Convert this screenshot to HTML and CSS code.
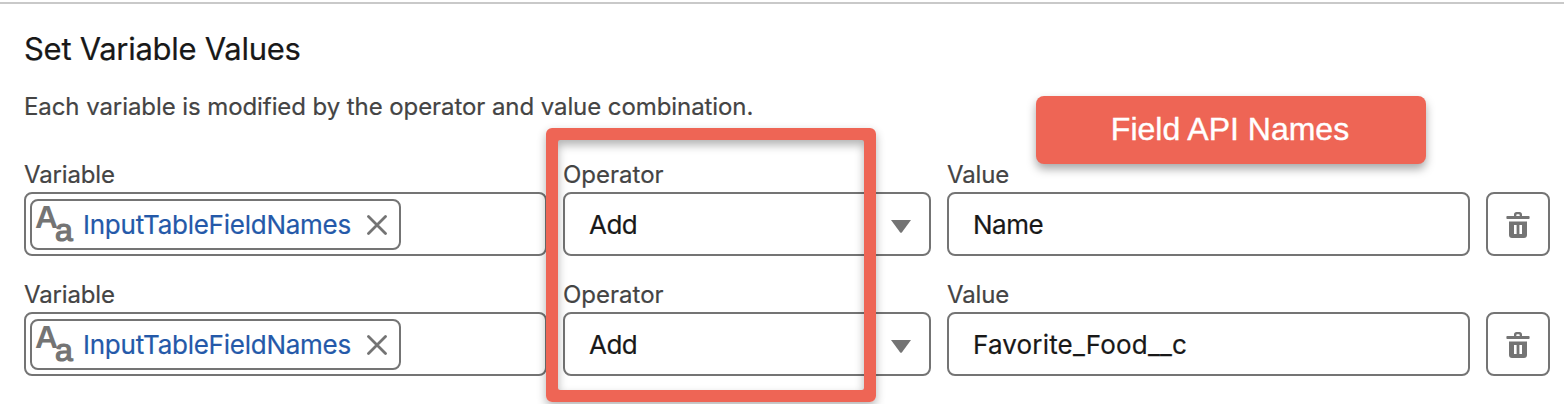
FILE: index.html
```html
<!DOCTYPE html>
<html lang="en">
<head>
<meta charset="utf-8">
<title>Set Variable Values</title>
<link rel="stylesheet" href="styles.css">
</head>
<body>
<svg class="defs" width="0" height="0" aria-hidden="true">
  <symbol id="close" viewBox="0 0 20 20"><path d="M1.5 1.5 18.5 18.5M18.5 1.5 1.5 18.5" fill="none" stroke="#747474" stroke-width="2.8" stroke-linecap="round"/></symbol>
  <symbol id="trash" viewBox="0 0 24 28"><path fill="#747474" fill-rule="evenodd" d="M1.500 5H8V3.600C8 2 9 1 10.500 1h3C15 1 16 2 16 3.600V5h6.500c.7 0 1.100.4 1.100 1v1c0 .6-.4 1-1.100 1h-21C.8 8 .4 7.600.4 7V6c0-.6.400-1 1.100-1ZM10.300 5h3.400V4c0-.5-.3-.8-.8-.8h-1.800c-.5 0-.8.3-.8.800ZM3 10.400h18V24c0 1.800-1.200 3-3 3H6c-1.800 0-3-1.200-3-3ZM8 14v9h2.600v-9ZM13.400 14v9h2.600v-9Z"/></symbol>
</svg>
<main class="panel">
  <h1 class="title">Set Variable Values</h1>
  <p class="description">Each variable is modified by the operator and value combination.</p>
  <div class="rows">
    <div class="row">
      <div class="field"><span class="label label-variable">Variable</span>
        <div class="box lookup"><div class="pill"><span class="type-icon"><b class="big">A</b><b class="small">a</b></span><span class="pill-text">InputTableFieldNames</span><svg class="close"><use href="#close"/></svg></div></div></div>
      <div class="field"><span class="label label-operator">Operator</span>
        <div class="box select"><span class="add">Add</span><svg class="arrow" viewBox="0 0 20 13"><path d="M0 0H20L11 12.300Q10 13.400 9 12.300Z" fill="#747474"/></svg></div></div>
      <div class="field"><span class="label label-value">Value</span>
        <div class="box input"><span class="name">Name</span></div></div>
      <button class="delete" aria-label="Delete"><svg class="trash"><use href="#trash"/></svg></button>
    </div>
    <div class="row">
      <div class="field"><span class="label label-variable">Variable</span>
        <div class="box lookup"><div class="pill"><span class="type-icon"><b class="big">A</b><b class="small">a</b></span><span class="pill-text">InputTableFieldNames</span><svg class="close"><use href="#close"/></svg></div></div></div>
      <div class="field"><span class="label label-operator">Operator</span>
        <div class="box select"><span class="add">Add</span><svg class="arrow" viewBox="0 0 20 13"><path d="M0 0H20L11 12.300Q10 13.400 9 12.300Z" fill="#747474"/></svg></div></div>
      <div class="field"><span class="label label-value">Value</span>
        <div class="box input"><span class="food">Favorite_Food__c</span></div></div>
      <button class="delete" aria-label="Delete"><svg class="trash"><use href="#trash"/></svg></button>
    </div>
  </div>
</main>
<div class="highlight"></div>
<div class="callout"><span class="callout-text">Field API Names</span></div>
</body>
</html>
```
FILE: styles.css
```css
* { box-sizing: border-box; }
body { margin: 0; padding-top: 2px; height: 404px; overflow: hidden; background: #fff; position: relative; font-family: Inter, "Liberation Sans", sans-serif; color: #181818; white-space: nowrap; }
.defs { position: absolute; }
.panel { height: 402px; border-top: 2px solid #c9c9c9; padding: 25px 14px 0 24px; }
.title { margin: 0; font-size: 31px; line-height: 40px; font-weight: 400; letter-spacing: -0.28px; -webkit-text-stroke: 0.2px; }
.description { margin: 22px 0 0; font-size: 24px; line-height: 32px; color: #444; letter-spacing: -0.08px; -webkit-text-stroke: 0.2px; }
.rows { display: flex; flex-direction: column; gap: 20px; margin-top: 33px; }
.row { display: grid; grid-template-columns: 523px 368px 523px 64px; column-gap: 16px; height: 100px; align-items: end; }
.field { display: flex; flex-direction: column; }
.label { font-size: 24px; line-height: 34px; color: #444; -webkit-text-stroke: 0.2px; }
.label-variable, .label-value { letter-spacing: -0.15px; }
.box { display: flex; align-items: center; height: 64px; border: 2px solid #747474; border-radius: 8px; background: #fff; font-size: 26px; }
.lookup { padding-left: 4px; }
.pill { display: flex; align-items: center; width: 371px; height: 51px; border: 2px solid #747474; border-radius: 8px; padding-left: 4px; }
.type-icon { display: flex; width: 38px; height: 42px; color: #747474; font-family: "Liberation Sans", Arial, sans-serif; }
.big { width: 22px; font-size: 32px; line-height: 29px; margin-left: -1px; }
.small { font-size: 32px; line-height: 55px; font-weight: 400; margin-left: -2px; -webkit-text-stroke: 1.2px #747474; }
.pill-text { width: 268px; margin-left: 9px; padding-top: 1px; color: #2459a9; letter-spacing: -0.25px; -webkit-text-stroke: 0.2px; }
.close { width: 20px; height: 20px; margin: 2px 0 0 16px; }
.select { justify-content: space-between; padding: 0 18px 0 24px; }
.input { padding-left: 24px; }
.add, .name, .food { padding-top: 1px; -webkit-text-stroke: 0.2px; }
.add, .name { letter-spacing: -0.5px; }
.food { letter-spacing: 0.17px; }
.arrow { width: 20px; height: 13px; margin-top: 4px; }
.delete { display: flex; align-items: center; justify-content: center; width: 64px; height: 64px; padding: 0; border: 2px solid #747474; border-radius: 8px; background: #fff; }
.trash { width: 24px; height: 28px; margin-top: 1px; }
.highlight { position: absolute; left: 546px; top: 128px; width: 330px; height: 274px; border: 12px solid #ee6555; border-radius: 6px; box-shadow: 0 4px 10px rgba(0,0,0,.3), inset 0 5px 10px rgba(0,0,0,.3); }
.highlight::before { content: ""; position: absolute; inset: -1px; border: 1px solid #ee6555; border-radius: 3px; }
.callout { position: absolute; left: 1036px; top: 96px; width: 390px; height: 68px; display: flex; justify-content: center; border-radius: 8px; background: #ee6555; box-shadow: 0 5px 10px rgba(0,0,0,.35); color: #fff; font: 32px/66px "Liberation Sans", Arial, sans-serif; }
.callout-text { margin-right: 2px; -webkit-text-stroke: 0.4px #fff; }
```
